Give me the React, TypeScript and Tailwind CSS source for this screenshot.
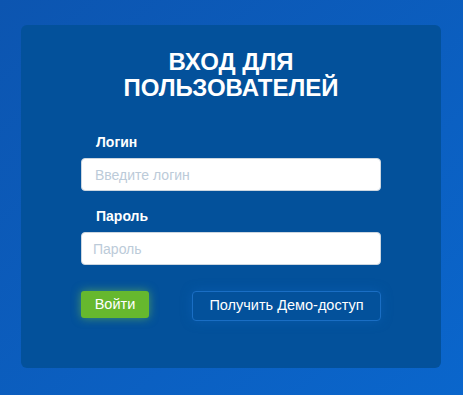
export default function App() {
  return (
    <div
      className="w-[463px] h-[395px] bg-gradient-to-br from-[#0c55b0] to-[#0a66cc] pt-[25px] pl-[21px]"
      style={{ fontFamily: '"Liberation Sans", Arial, sans-serif' }}
    >
      <div className="w-[420px] h-[343px] rounded-[6px] bg-[#03519b] flex flex-col items-center">
        <h1 className="mt-[24px] text-center text-white font-bold text-[24px] leading-[26px] uppercase">
          Вход для
          <br />
          пользователей
        </h1>

        <div className="mt-[33px] w-[300px] flex flex-col">
          <label className="pl-[15px] text-white font-bold text-[14px] leading-[16px]">Логин</label>
          <input
            className="mt-[8px] h-[33px] w-full rounded-[4px] bg-white border border-[#ccd6e0] px-[13px] text-[14px] text-[#333] placeholder:text-[#bccbd9] outline-none"
            placeholder="Введите логин"
          />

          <label className="mt-[17px] pl-[15px] text-white font-bold text-[14px] leading-[16px]">Пароль</label>
          <input
            type="password"
            className="mt-[8px] h-[33px] w-full rounded-[4px] bg-white border border-[#ccd6e0] px-[11px] text-[14px] text-[#333] placeholder:text-[#bccbd9] outline-none"
            placeholder="Пароль"
          />

          <div className="mt-[26px] flex items-start justify-between">
            <button className="h-[27px] w-[68px] rounded-[3px] bg-[#66b82e] text-white text-[14.5px] shadow-[0_0_10px_rgba(130,210,60,0.55)]">
              Войти
            </button>
            <button className="h-[30px] w-[189px] rounded-[4px] border border-[#1a6ec4] bg-[#03519b] text-white text-[14.5px] shadow-[0_0_12px_rgba(20,110,200,0.35)]">
              Получить Демо-доступ
            </button>
          </div>
        </div>
      </div>
    </div>
  );
}
